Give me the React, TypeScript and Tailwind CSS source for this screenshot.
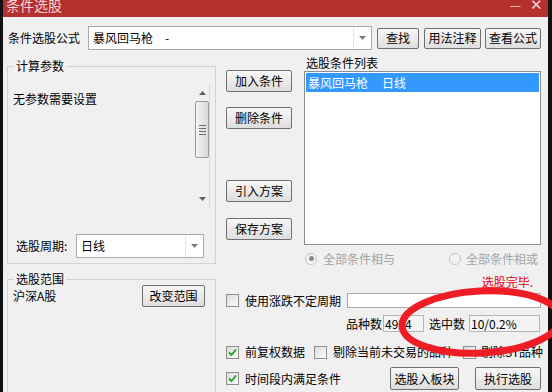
import React from "react";

const font = "font-['Noto_Sans_CJK_SC','Noto_Sans',sans-serif]";

export default function App() {
    return (
        <div className={`relative w-[552px] h-[392px] overflow-hidden bg-[#111111] text-[12px] leading-[14px] text-black whitespace-nowrap ${font}`}>
            <div className="ml-[3px] w-[545px] h-full flex flex-col bg-[#f0f0f0]">
                {/* 标题栏 - 上半部分被截掉 */}
                <div className="h-[17px] shrink-0 bg-[#b4302f] flex items-start text-[#f6d4d4]">
                    <span className="ml-[3px] mt-[-4px] text-[14px] leading-[18px]">条件选股</span>
                    <span className="ml-auto mt-[-2px] text-[13px] leading-[14px]">—</span>
                    <span className="ml-[9px] mr-[5px] mt-[-4px] text-[15px] leading-[15px]">✕</span>
                </div>

                <div className="flex flex-col pl-[4px]">
                    {/* 公式行 */}
                    <div className="mt-[9px] h-[24px] flex items-center">
                        <span className="ml-[1px] w-[80px]">条件选股公式</span>
                        <ComboBox width="w-[284px]">
                            <span className="ml-[4px]">暴风回马枪</span>
                            <span className="ml-[12px]">-</span>
                        </ComboBox>
                        <Button className="ml-[5px] w-[42px] h-[21px]">查找</Button>
                        <Button className="ml-[5px] w-[57px] h-[21px]">用法注释</Button>
                        <Button className="ml-[4px] w-[56px] h-[21px]">查看公式</Button>
                    </div>

                    <div className="mt-[6px] flex">
                        {/* 左侧 */}
                        <div className="w-[209px] shrink-0 pt-[3px] flex flex-col">
                            <fieldset className="h-[205px] border border-[#d3d3d3] flex flex-col">
                                <legend className="ml-[6px] px-[2px] h-[14px]">计算参数</legend>
                                <div className="mt-[13px] h-[122px] flex">
                                    <div className="flex-1 pl-[5px] pt-[6px]">无参数需要设置</div>
                                    <ScrollBar />
                                    <div className="w-[5px]" />
                                </div>
                                <div className="mt-[26px] h-[24px] flex items-center">
                                    <span className="ml-[8px] w-[60px]">选股周期:</span>
                                    <ComboBox width="w-[128px]">
                                        <span className="ml-[4px]">日线</span>
                                    </ComboBox>
                                </div>
                            </fieldset>
                            <fieldset className="mt-[8px] h-[140px] border border-[#d3d3d3] flex flex-col">
                                <legend className="ml-[6px] px-[2px] h-[14px]">选股范围</legend>
                                <div className="mt-[-1px] h-[22px] flex items-center">
                                    <span className="ml-[5px]">沪深A股</span>
                                    <Button className="ml-auto mr-[10px] w-[63px] h-[22px]">改变范围</Button>
                                </div>
                            </fieldset>
                        </div>

                        {/* 右侧 */}
                        <div className="ml-[10px] w-[315px] shrink-0 flex flex-col">
                            <div className="flex">
                                <div className="w-[66px] pt-[14px] flex flex-col">
                                    <Button className="w-[66px] h-[22px]">加入条件</Button>
                                    <Button className="mt-[15px] w-[66px] h-[22px]">删除条件</Button>
                                    <Button className="mt-[51px] w-[66px] h-[22px]">引入方案</Button>
                                    <Button className="mt-[16px] w-[66px] h-[22px]">保存方案</Button>
                                </div>
                                <div className="ml-[12px] w-[237px] flex flex-col">
                                    <div className="h-[14px] ml-[2px]">选股条件列表</div>
                                    <div className="mt-[1px] h-[174px] border border-[#8d8d8d] bg-white p-[1px]">
                                        <div className="h-[19px] bg-[#3399ff] text-white flex items-center">
                                            <span className="ml-[2px]">暴风回马枪</span>
                                            <span className="ml-[14px]">日线</span>
                                        </div>
                                    </div>
                                </div>
                            </div>

                            {/* 单选 */}
                            <div className="mt-[7px] h-[13px] flex items-center text-[#a3a3a3]">
                                <Radio checked className="ml-[79px]" />
                                <span className="ml-[6px]">全部条件相与</span>
                                <Radio className="ml-[54px]" />
                                <span className="ml-[5px]">全部条件相或</span>
                            </div>

                            <div className="mt-[10px] h-[14px] flex justify-end pr-[8px] text-[#e60012]">选股完毕.</div>

                            <div className="mt-[4px] h-[15px] flex items-center">
                                <CheckBox />
                                <span className="ml-[6px]">使用涨跌不定周期</span>
                                <div className="ml-[6px] flex-1 h-[15px] border border-[#a9a9a9] bg-white" />
                            </div>

                            <div className="mt-[7px] h-[17px] flex items-center">
                                <span className="ml-[120px]">品种数</span>
                                <Field className="ml-[1px] w-[41px]">4924</Field>
                                <span className="ml-[5px]">选中数</span>
                                <Field className="ml-[4px] w-[71px]">10/0.2%</Field>
                            </div>

                            <div className="mt-[13px] h-[14px] flex items-center">
                                <CheckBox checked />
                                <span className="ml-[6px] shrink-0">前复权数据</span>
                                <CheckBox className="ml-[9px]" />
                                <span className="ml-[6px] shrink-0">剔除当前未交易的品种</span>
                                <CheckBox className="ml-[10px]" />
                                <span className="ml-[5px] shrink-0">剔除ST品种</span>
                            </div>

                            <div className="mt-[8px] h-[23px] flex items-center">
                                <CheckBox checked />
                                <span className="ml-[6px] shrink-0">时间段内满足条件</span>
                                <Button className="ml-[49px] w-[69px] h-[23px]">选股入板块</Button>
                                <Button className="ml-[16px] w-[66px] h-[23px]">执行选股</Button>
                            </div>
                        </div>
                    </div>
                </div>
            </div>

            {/* 红色标注圈 */}
            <svg className="absolute left-0 top-0 pointer-events-none" width="552" height="392">
                <ellipse cx="481" cy="322" rx="79" ry="31" fill="none" stroke="#ee1c25" strokeWidth="7" transform="rotate(-3 481 322)" />
            </svg>
        </div>
    );
}

function Button({ children, className = "" }: { children: React.ReactNode; className?: string }) {
    return (
        <div className={`shrink-0 flex items-center justify-center border border-[#707070] rounded-[2px] bg-gradient-to-b from-[#f7f7f7] to-[#dedede] ${className}`}>
            {children}
        </div>
    );
}

function ComboBox({ children, width }: { children: React.ReactNode; width: string }) {
    return (
        <div className={`shrink-0 h-[24px] border border-[#a9a9a9] bg-white flex items-center ${width}`}>
            <div className="flex-1 flex items-center">{children}</div>
            <div className="w-[18px] h-full border-l border-[#e3e3e3] flex items-center justify-center">
                <svg width="7" height="4" viewBox="0 0 7 4">
                    <path d="M0 0 L7 0 L3.5 4 Z" fill="#7a7a7a" />
                </svg>
            </div>
        </div>
    );
}

function ScrollBar() {
    return (
        <div className="w-[15px] flex flex-col items-center border-r border-[#d8d8d8]">
            <svg className="mt-[5px]" width="7" height="4" viewBox="0 0 7 4">
                <path d="M0 4 L7 4 L3.5 0 Z" fill="#606060" />
            </svg>
            <div className="mt-[6px] w-[14px] h-[57px] border border-[#9b9b9b] rounded-[2px] bg-gradient-to-r from-[#f4f4f4] to-[#d9d9d9] flex flex-col items-center justify-center gap-[2px]">
                <div className="w-[7px] h-[1px] bg-[#6c6c6c]" />
                <div className="w-[7px] h-[1px] bg-[#6c6c6c]" />
                <div className="w-[7px] h-[1px] bg-[#6c6c6c]" />
                <div className="w-[7px] h-[1px] bg-[#6c6c6c]" />
            </div>
            <svg className="mt-auto mb-[7px]" width="7" height="4" viewBox="0 0 7 4">
                <path d="M0 0 L7 0 L3.5 4 Z" fill="#606060" />
            </svg>
        </div>
    );
}

function Radio({ checked = false, className = "" }: { checked?: boolean; className?: string }) {
    return (
        <div className={`shrink-0 w-[12px] h-[12px] rounded-full border border-[#c4c4c4] bg-[#f4f4f4] flex items-center justify-center ${className}`}>
            {checked && <div className="w-[5px] h-[5px] rounded-full bg-[#8a8a8a]" />}
        </div>
    );
}

function CheckBox({ checked = false, className = "" }: { checked?: boolean; className?: string }) {
    return (
        <div className={`shrink-0 w-[13px] h-[13px] border border-[#8f8f8f] bg-gradient-to-br from-[#dcdcdc] to-[#fbfbfb] flex items-center justify-center ${className}`}>
            {checked && (
                <svg width="9" height="9" viewBox="0 0 9 9">
                    <path d="M1 4.5 L3.5 7 L8 1.5" fill="none" stroke="#21a121" strokeWidth="1.8" />
                </svg>
            )}
        </div>
    );
}

function Field({ children, className = "" }: { children: React.ReactNode; className?: string }) {
    return (
        <div className={`shrink-0 h-[17px] border border-[#b5b5b5] bg-[#f4f4f4] flex items-center pl-[1px] ${className}`}>
            {children}
        </div>
    );
}
